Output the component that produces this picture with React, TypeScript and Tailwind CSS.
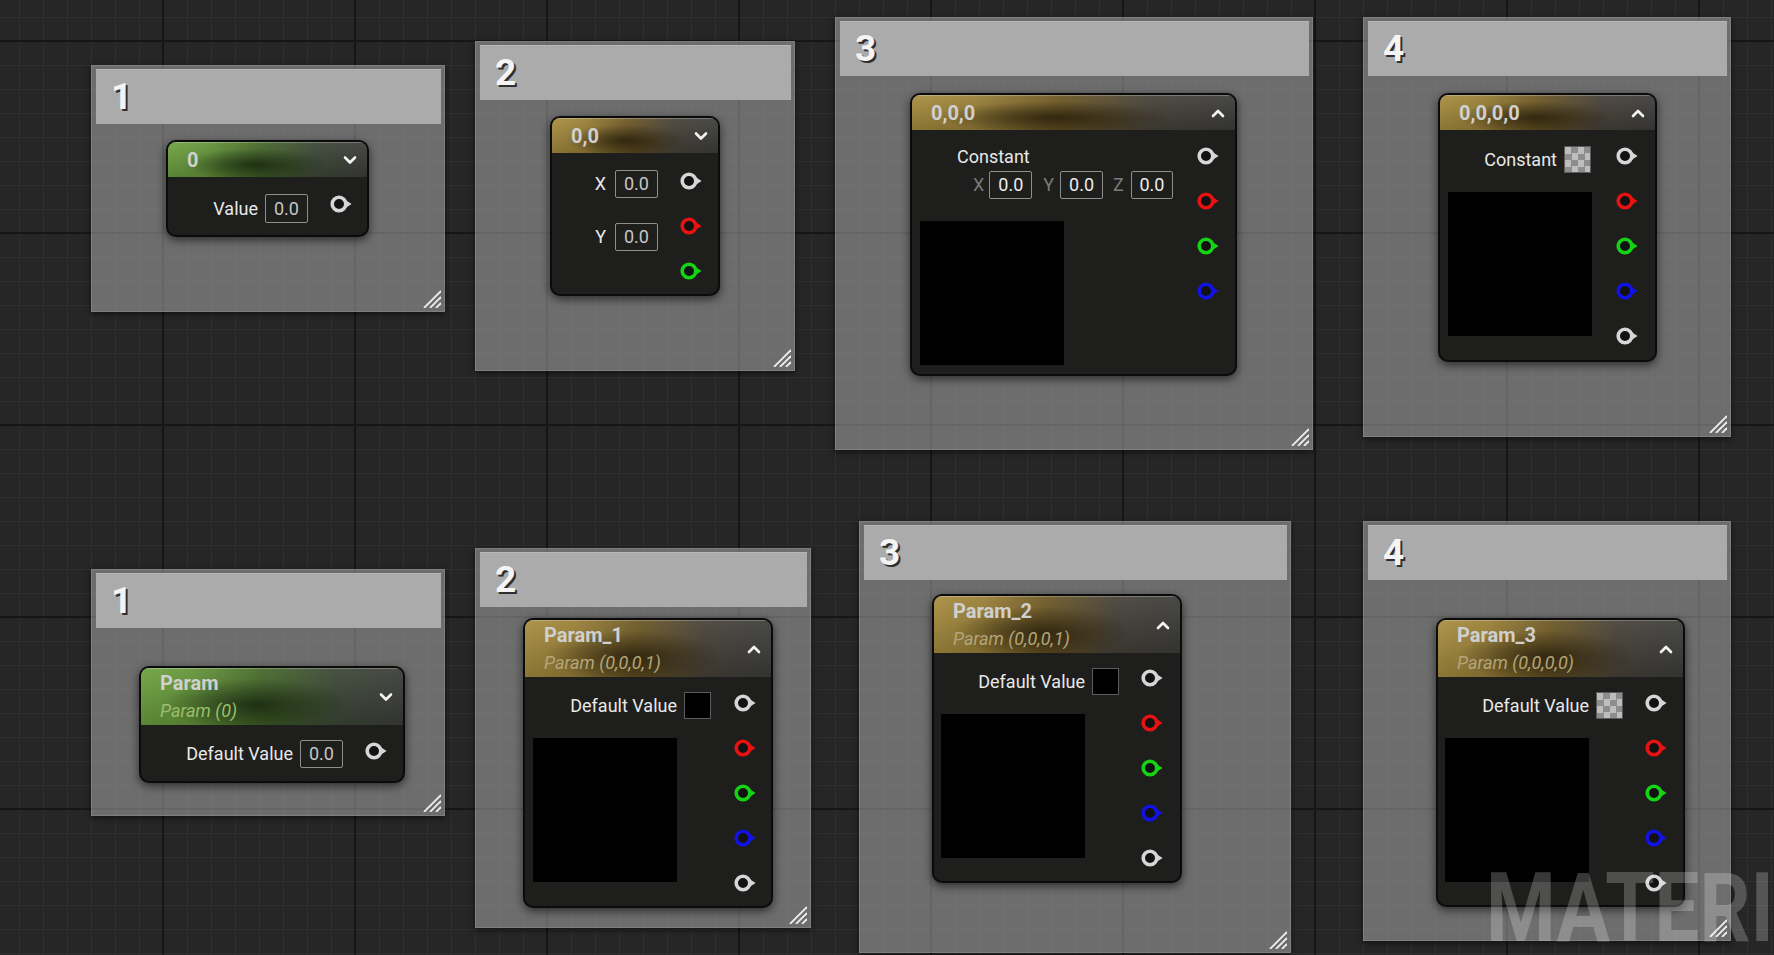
import React from "react";

type PinColor = "white" | "red" | "green" | "blue";
const pinColors: Record<PinColor, string> = {
  white: "#d6d6d6",
  red: "#e81212",
  green: "#14d414",
  blue: "#1212e6",
};

function Pin({ c }: { c: PinColor }) {
  const col = pinColors[c];
  return (
    <svg width="22" height="16" viewBox="0 0 22 16" className="block overflow-visible">
      <circle cx="8" cy="8" r="6.8" fill="#121212" stroke={col} strokeWidth="3.6" />
      <path d="M14.8 4.2 L20.6 8 L14.8 11.8 Z" fill={col} />
    </svg>
  );
}

function Pins({ list, cls }: { list: PinColor[]; cls: string }) {
  return (
    <div className={`flex flex-col gap-[29px] ${cls}`}>
      {list.map((c, i) => (
        <Pin key={i} c={c} />
      ))}
    </div>
  );
}

function Chevron({ up }: { up?: boolean }) {
  return (
    <svg width="14" height="10" viewBox="0 0 14 10" className="block">
      <path
        d={up ? "M2 8 L7 3 L12 8" : "M2 2.5 L7 7.5 L12 2.5"}
        fill="none"
        stroke="#f4f4f4"
        strokeWidth="2.6"
        strokeLinecap="round"
        strokeLinejoin="round"
      />
    </svg>
  );
}

function Box({ cls = "w-[43px] h-[29px]", txt = "text-[#c6c6c6]" }: { cls?: string; txt?: string }) {
  return (
    <div
      className={`flex items-center justify-center rounded-[2px] border-[1.5px] border-[#8e8e8e] text-[18px] leading-none ${cls} ${txt}`}
    >
      0.0
    </div>
  );
}

function BlackSwatch() {
  return <div className="h-[27px] w-[27px] border border-[#5c5c5c] bg-black" />;
}

function Checker() {
  return (
    <div className="h-[27px] w-[27px] border border-[#5a5a5a] [background:repeating-conic-gradient(#8d8d8d_0_25%,#bdbdbd_0_50%)_0_0/13px_13px]" />
  );
}

const GREEN =
  "bg-[image:linear-gradient(180deg,rgba(255,255,255,0.06),rgba(0,0,0,0.18)),radial-gradient(ellipse_36%_46%_at_44%_64%,rgba(22,40,12,0.85),transparent),linear-gradient(90deg,#6fa341_0%,#64953a_20%,#46692a_46%,#3d4837_74%,#3d3e3c_100%)]";
const GOLD =
  "bg-[image:linear-gradient(180deg,rgba(255,255,255,0.06),rgba(0,0,0,0.18)),radial-gradient(ellipse_36%_46%_at_44%_64%,rgba(42,31,8,0.85),transparent),linear-gradient(90deg,#a98f41_0%,#9a8038_20%,#6d5825_46%,#47423a_74%,#3e3e3c_100%)]";

function Header({
  kind,
  title,
  sub,
  up,
}: {
  kind: "green" | "gold";
  title: string;
  sub?: string;
  up?: boolean;
}) {
  return (
    <div
      className={`flex shrink-0 items-center justify-between pl-[19px] pr-[10px] shadow-[inset_0_1px_0_rgba(255,255,255,0.25)] ${
        kind === "green" ? GREEN : GOLD
      } ${sub ? "h-[57px]" : "h-[35px]"}`}
    >
      <div className="flex flex-col">
        <span className="text-[20px] font-bold leading-[24px] text-[#d0d0d0]">{title}</span>
        {sub && (
          <span
            className={`mt-[4px] text-[18px] italic leading-[24px] ${
              kind === "green" ? "text-[#9dbd6c]" : "text-[#b4a579]"
            }`}
          >
            {sub}
          </span>
        )}
      </div>
      <Chevron up={up} />
    </div>
  );
}

const NODE =
  "absolute flex flex-col overflow-hidden rounded-[10px] border-2 border-[#0b0b0b] bg-[#1e1f1c] shadow-[0_3px_10px_rgba(0,0,0,0.6)]";
const LABEL = "text-[18px] leading-[22px] text-[#e8e8e8] whitespace-nowrap";

function Grip() {
  return (
    <svg width="19" height="19" viewBox="0 0 19 19" className="absolute bottom-[3px] right-[3px]">
      <g stroke="#ededed" strokeWidth="1.8">
        <line x1="19" y1="2" x2="2" y2="19" />
        <line x1="19" y1="8" x2="8" y2="19" />
        <line x1="19" y1="14" x2="14" y2="19" />
      </g>
    </svg>
  );
}

function Comment({ pos, label }: { pos: string; label: string }) {
  return (
    <div
      className={`absolute border border-[#8a8a8a]/60 bg-[rgba(168,168,168,0.55)] shadow-[0_2px_6px_rgba(0,0,0,0.55)] ${pos}`}
    >
      <div className="ml-[4px] mr-[3px] mt-[3px] flex h-[55px] items-center bg-[#ababab] pl-[15px] shadow-[inset_0_1px_0_rgba(255,255,255,0.15)]">
        <span className="text-[37px] font-bold leading-none text-[#f4f4f4] [text-shadow:2px_2px_0_#2e2e2e]">
          {label}
        </span>
      </div>
      <Grip />
    </div>
  );
}

export default function App() {
  return (
    <div className="relative h-[955px] w-[1774px] overflow-hidden bg-[#262626] font-['Roboto','Noto_Sans',sans-serif] [background-image:linear-gradient(90deg,#161616_0_2px,transparent_2px),linear-gradient(180deg,#161616_0_2px,transparent_2px),linear-gradient(90deg,#2f2f2f_0_1px,transparent_1px),linear-gradient(180deg,#2f2f2f_0_1px,transparent_1px)] [background-size:192px_192px,192px_192px,24px_24px,24px_24px] [background-position:162px_0,0_40px,19px_0,0_17px]">
      {/* comment boxes */}
      <Comment pos="left-[91px] top-[65px] w-[354px] h-[247px]" label="1" />
      <Comment pos="left-[475px] top-[41px] w-[320px] h-[330px]" label="2" />
      <Comment pos="left-[835px] top-[17px] w-[478px] h-[433px]" label="3" />
      <Comment pos="left-[1363px] top-[17px] w-[368px] h-[420px]" label="4" />
      <Comment pos="left-[91px] top-[569px] w-[354px] h-[247px]" label="1" />
      <Comment pos="left-[475px] top-[548px] w-[336px] h-[380px]" label="2" />
      <Comment pos="left-[859px] top-[521px] w-[432px] h-[432px]" label="3" />
      <Comment pos="left-[1363px] top-[521px] w-[368px] h-[420px]" label="4" />

      {/* N1 scalar constant */}
      <div className={`${NODE} left-[166px] top-[140px] h-[97px] w-[203px]`}>
        <Header kind="green" title="0" />
        <div className="flex flex-1">
          <div className="flex flex-1 items-start justify-end pr-[23px] pt-[17px]">
            <div className="flex items-center gap-[7px]">
              <span className={LABEL}>Value</span>
              <Box />
            </div>
          </div>
          <Pins list={["white"]} cls="pt-[19px] pr-[14px]" />
        </div>
      </div>

      {/* N2 constant 2 vector */}
      <div className={`${NODE} left-[550px] top-[116px] h-[180px] w-[170px]`}>
        <Header kind="gold" title="0,0" />
        <div className="flex flex-1">
          <div className="flex flex-1 flex-col items-end gap-[25px] pr-[23px] pt-[17px]">
            <div className="flex items-center gap-[9px]">
              <span className={LABEL}>X</span>
              <Box cls="w-[43px] h-[28px]" />
            </div>
            <div className="flex items-center gap-[9px]">
              <span className={LABEL}>Y</span>
              <Box cls="w-[43px] h-[28px]" />
            </div>
          </div>
          <Pins list={["white", "red", "green"]} cls="pt-[20px] pr-[15px]" />
        </div>
      </div>

      {/* N3 constant 3 vector */}
      <div className={`${NODE} left-[910px] top-[93px] h-[283px] w-[327px]`}>
        <Header kind="gold" title="0,0,0" up />
        <div className="flex flex-1">
          <div className="flex flex-1 flex-col items-start pt-[16px]">
            <span className={`${LABEL} ml-[45px]`}>Constant</span>
            <div className="ml-[61px] mt-[3px] flex items-center">
              <span className="mr-[5px] text-[18px] leading-none text-[#7a7a7a]">X</span>
              <Box cls="w-[43px] h-[28px]" txt="text-[#ececec]" />
              <span className="ml-[11px] mr-[6px] text-[18px] leading-none text-[#7a7a7a]">Y</span>
              <Box cls="w-[43px] h-[28px]" txt="text-[#ececec]" />
              <span className="ml-[10px] mr-[7px] text-[18px] leading-none text-[#7a7a7a]">Z</span>
              <Box cls="w-[42px] h-[28px]" txt="text-[#ececec]" />
            </div>
            <div className="ml-[8px] mt-[22px] h-[144px] w-[144px] bg-black" />
          </div>
          <Pins list={["white", "red", "green", "blue"]} cls="pt-[18px] pr-[15px]" />
        </div>
      </div>

      {/* N4 constant 4 vector */}
      <div className={`${NODE} left-[1438px] top-[93px] h-[269px] w-[219px]`}>
        <Header kind="gold" title="0,0,0,0" up />
        <div className="flex flex-1">
          <div className="flex flex-1 flex-col pt-[16px]">
            <div className="flex items-center justify-end gap-[7px] pr-[26px]">
              <span className={LABEL}>Constant</span>
              <Checker />
            </div>
            <div className="ml-[8px] mt-[19px] h-[144px] w-[144px] bg-black" />
          </div>
          <Pins list={["white", "red", "green", "blue", "white"]} cls="pt-[18px] pr-[16px]" />
        </div>
      </div>

      {/* N5 scalar param */}
      <div className={`${NODE} left-[139px] top-[666px] h-[117px] w-[266px]`}>
        <Header kind="green" title="Param" sub="Param (0)" />
        <div className="flex flex-1">
          <div className="flex flex-1 items-start justify-end pr-[23px] pt-[15px]">
            <div className="flex items-center gap-[7px]">
              <span className={LABEL}>Default Value</span>
              <Box cls="w-[43px] h-[28px]" />
            </div>
          </div>
          <Pins list={["white"]} cls="pt-[18px] pr-[15px]" />
        </div>
      </div>

      {/* N6 vector param */}
      <div className={`${NODE} left-[523px] top-[618px] h-[290px] w-[250px]`}>
        <Header kind="gold" title="Param_1" sub="Param (0,0,0,1)" up />
        <div className="flex flex-1">
          <div className="flex flex-1 flex-col pt-[15px]">
            <div className="flex items-center justify-end gap-[7px] pr-[24px]">
              <span className={LABEL}>Default Value</span>
              <BlackSwatch />
            </div>
            <div className="ml-[8px] mt-[19px] h-[144px] w-[144px] bg-black" />
          </div>
          <Pins list={["white", "red", "green", "blue", "white"]} cls="pt-[18px] pr-[14px]" />
        </div>
      </div>

      {/* N7 vector param */}
      <div className={`${NODE} left-[932px] top-[594px] h-[289px] w-[250px]`}>
        <Header kind="gold" title="Param_2" sub="Param (0,0,0,1)" up />
        <div className="flex flex-1">
          <div className="flex flex-1 flex-col pt-[15px]">
            <div className="flex items-center justify-end gap-[7px] pr-[23px]">
              <span className={LABEL}>Default Value</span>
              <BlackSwatch />
            </div>
            <div className="ml-[7px] mt-[19px] h-[144px] w-[144px] bg-black" />
          </div>
          <Pins list={["white", "red", "green", "blue", "white"]} cls="pt-[17px] pr-[16px]" />
        </div>
      </div>

      {/* N8 vector param */}
      <div className={`${NODE} left-[1436px] top-[618px] h-[289px] w-[249px]`}>
        <Header kind="gold" title="Param_3" sub="Param (0,0,0,0)" up />
        <div className="flex flex-1">
          <div className="flex flex-1 flex-col pt-[15px]">
            <div className="flex items-center justify-end gap-[7px] pr-[23px]">
              <span className={LABEL}>Default Value</span>
              <Checker />
            </div>
            <div className="ml-[7px] mt-[19px] h-[144px] w-[144px] bg-black" />
          </div>
          <Pins list={["white", "red", "green", "blue", "white"]} cls="pt-[18px] pr-[15px]" />
        </div>
      </div>

      {/* watermark */}
      <div className="pointer-events-none absolute left-[1486px] top-[860px] origin-left scale-x-[0.83] whitespace-nowrap text-[96px] font-bold leading-none text-white/[0.22]">
        MATERI
      </div>
    </div>
  );
}
